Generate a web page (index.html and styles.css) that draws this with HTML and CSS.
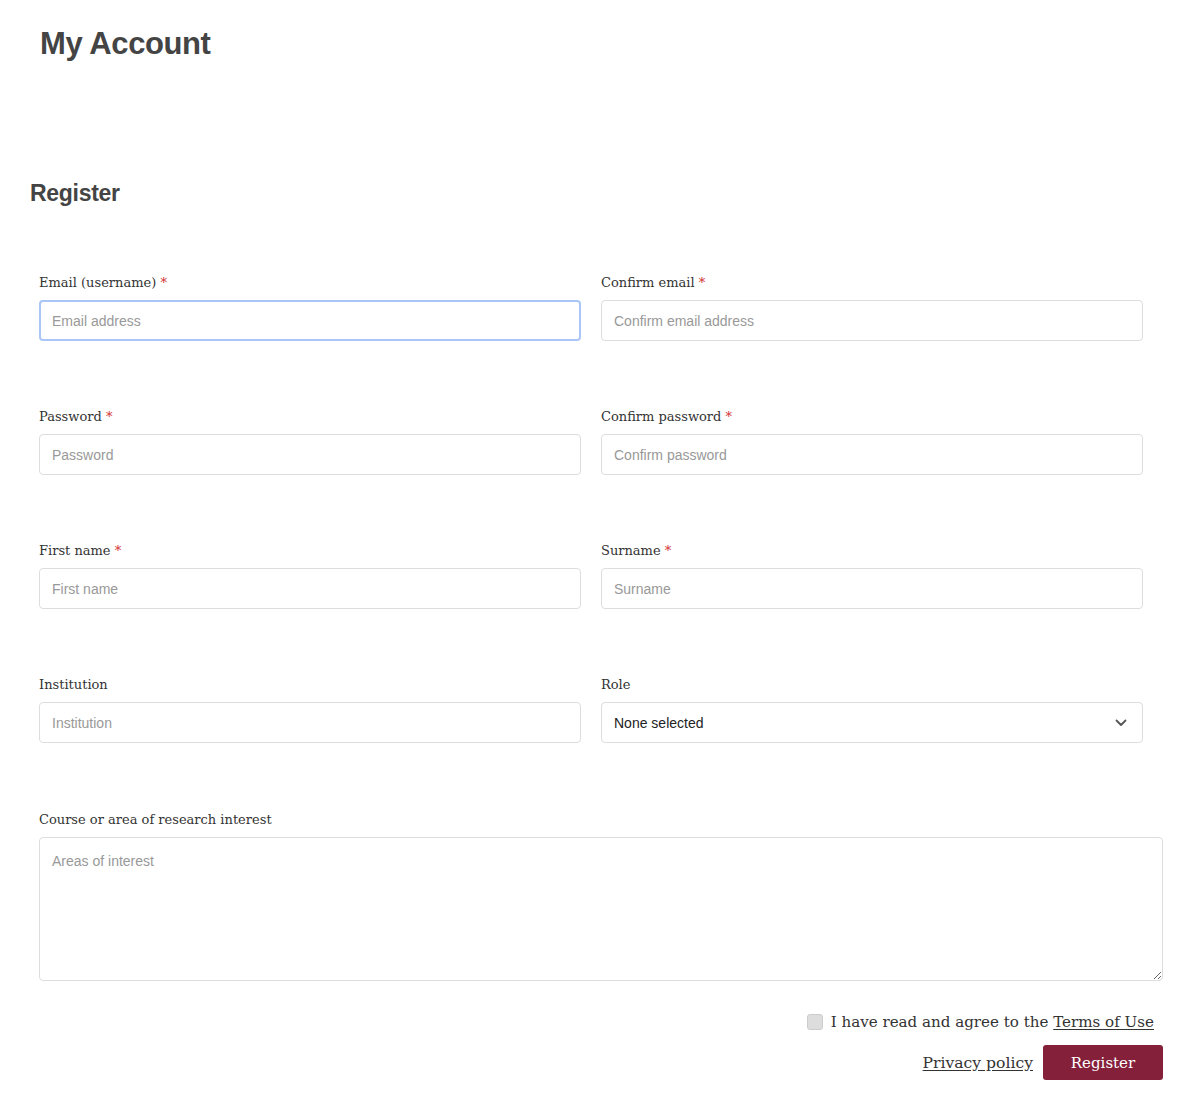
FILE: index.html
```html
<!DOCTYPE html>
<html lang="en">
<head>
    <meta charset="UTF-8">
    <meta name="viewport" content="width=device-width, initial-scale=1.0">
    <title>My Account</title>
    <link rel="stylesheet" href="styles.css">
</head>
<body>

    <div class="page">
        <h1 class="page-title">My Account</h1>

        <h2 class="section-title">Register</h2>

        <!-- Formulario de registro -->
        <form class="register-form">
            <div class="form-grid">
                <div class="field">
                    <label for="email">Email (username) <span class="req">*</span></label>
                    <input type="email" id="email" class="input-field focused" placeholder="Email address">
                </div>
                <div class="field">
                    <label for="email2">Confirm email <span class="req">*</span></label>
                    <input type="email" id="email2" class="input-field" placeholder="Confirm email address">
                </div>

                <div class="field">
                    <label for="pass">Password <span class="req">*</span></label>
                    <input type="password" id="pass" class="input-field" placeholder="Password">
                </div>
                <div class="field">
                    <label for="pass2">Confirm password <span class="req">*</span></label>
                    <input type="password" id="pass2" class="input-field" placeholder="Confirm password">
                </div>

                <div class="field">
                    <label for="fname">First name <span class="req">*</span></label>
                    <input type="text" id="fname" class="input-field" placeholder="First name">
                </div>
                <div class="field">
                    <label for="sname">Surname <span class="req">*</span></label>
                    <input type="text" id="sname" class="input-field" placeholder="Surname">
                </div>

                <div class="field">
                    <label for="inst">Institution</label>
                    <input type="text" id="inst" class="input-field" placeholder="Institution">
                </div>
                <div class="field">
                    <label for="role">Role</label>
                    <div class="select-wrap">
                        <select id="role" class="input-field select-field">
                            <option>None selected</option>
                        </select>
                        <svg class="chevron" width="12" height="8" viewBox="0 0 12 8">
                            <path d="M1.5 1.5 L6 6 L10.5 1.5" fill="none" stroke="#555" stroke-width="1.8" stroke-linecap="round" stroke-linejoin="round"/>
                        </svg>
                    </div>
                </div>
            </div>

            <div class="field field-wide">
                <label for="areas">Course or area of research interest</label>
                <textarea id="areas" class="input-field textarea-field" placeholder="Areas of interest"></textarea>
            </div>

            <div class="terms-row">
                <label class="terms">
                    <input type="checkbox" class="checkbox">
                    <span>I have read and agree to the <a href="#">Terms of Use</a></span>
                </label>
            </div>

            <div class="actions">
                <a href="#" class="privacy">Privacy policy</a>
                <button type="button" class="btn">Register</button>
            </div>
        </form>
    </div>

</body>
</html>
```

FILE: styles.css
```css
body {
    font-family: "Liberation Sans", Arial, sans-serif;
    background-color: #fff;
    color: #444;
    margin: 0;
    padding: 0;
}

.page {
    padding: 24px 37px 20px 30px;
}

.page-title {
    font-family: "Liberation Sans", Arial, sans-serif;
    font-size: 31px;
    font-weight: bold;
    color: #444;
    margin: 0 0 0 10px;
    line-height: 40px;
    letter-spacing: -0.4px;
}

.section-title {
    font-size: 23px;
    font-weight: bold;
    color: #444;
    margin: 114px 0 0 0;
    line-height: 30px;
    letter-spacing: -0.3px;
}

.register-form {
    margin-top: 66px;
    padding-left: 9px;
}

.form-grid {
    display: grid;
    grid-template-columns: 1fr 1fr;
    row-gap: 67px;
}

.field {
    padding-right: 20px;
}

.field-wide {
    padding-right: 0;
    margin-top: 68px;
}

.field label {
    display: block;
    font-family: "DejaVu Serif", Georgia, serif;
    font-size: 13px;
    color: #333;
    line-height: 18px;
    margin-bottom: 8px;
}

.req {
    color: #d32f2f;
}

.input-field {
    display: block;
    width: 100%;
    height: 41px;
    padding: 0 12px;
    font-family: "Liberation Sans", Arial, sans-serif;
    font-size: 14px;
    color: #333;
    border: 1px solid #ddd;
    border-radius: 4px;
    background-color: #fff;
    box-sizing: border-box;
    outline: none;
}

.input-field::placeholder {
    color: #999;
}

.input-field.focused {
    border: 2px solid #a9c6f7;
    padding: 0 11px;
}

.select-wrap {
    position: relative;
}

.select-field {
    appearance: none;
    -webkit-appearance: none;
    color: #222;
}

.chevron {
    position: absolute;
    right: 16px;
    top: 17px;
    pointer-events: none;
}

.textarea-field {
    height: 144px;
    padding: 15px 12px;
    resize: vertical;
}

.terms-row {
    display: flex;
    justify-content: flex-end;
    margin-top: 32px;
    padding-right: 9px;
}

.terms {
    display: flex;
    align-items: center;
    gap: 8px;
    font-family: "DejaVu Serif", Georgia, serif;
    font-size: 15.1px;
    color: #333;
}

.checkbox {
    width: 16px;
    height: 16px;
    margin: 0;
    appearance: none;
    -webkit-appearance: none;
    background-color: #ddd;
    border: 1px solid #ccc;
    border-radius: 3px;
}

.terms a,
.privacy {
    color: #333;
    text-decoration: underline;
    text-underline-offset: 2px;
}

.actions {
    display: flex;
    justify-content: flex-end;
    align-items: center;
    gap: 10px;
    margin-top: 14px;
}

.privacy {
    font-family: "DejaVu Serif", Georgia, serif;
    font-size: 15.6px;
}

.btn {
    width: 120px;
    height: 35px;
    background-color: #85203b;
    color: #fff;
    border: none;
    border-radius: 3px;
    font-family: "DejaVu Serif", Georgia, serif;
    font-size: 15px;
    cursor: pointer;
}
```
